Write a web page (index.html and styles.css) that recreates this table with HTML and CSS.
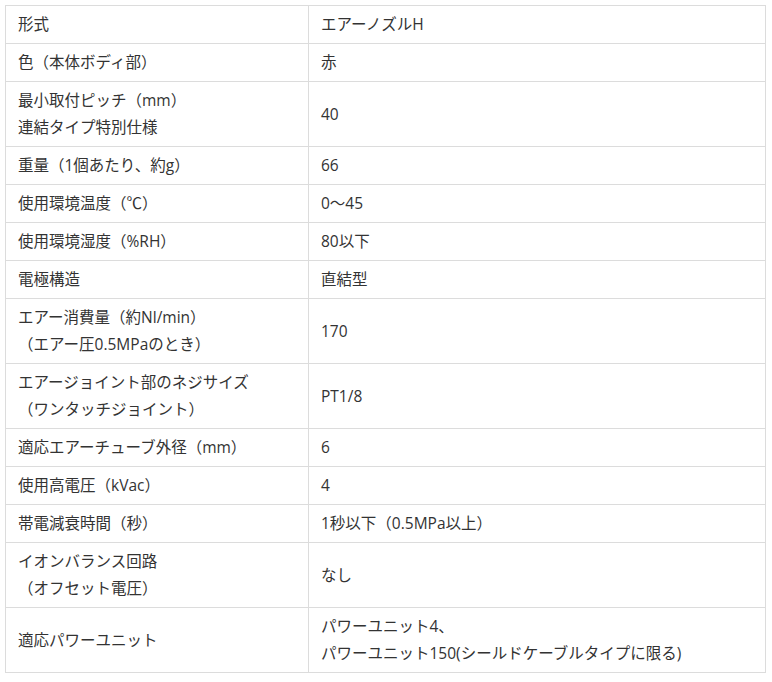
FILE: index.html
```html
<!DOCTYPE html>
<html lang="ja">
<head>
<meta charset="utf-8">
<link rel="stylesheet" href="styles.css">
</head>
<body>
<table class="spec">
<tbody>
<tr><td class="k">形式</td><td>エアーノズルH</td></tr>
<tr><td class="k">色（本体ボディ部）</td><td>赤</td></tr>
<tr><td class="k">最小取付ピッチ（mm）<br>連結タイプ特別仕様</td><td>40</td></tr>
<tr><td class="k">重量（1個あたり、約g）</td><td>66</td></tr>
<tr><td class="k">使用環境温度（℃）</td><td>0～45</td></tr>
<tr><td class="k">使用環境湿度（%RH）</td><td>80以下</td></tr>
<tr><td class="k">電極構造</td><td>直結型</td></tr>
<tr><td class="k">エアー消費量（約Nl/min）<br>（エアー圧0.5MPaのとき）</td><td>170</td></tr>
<tr><td class="k">エアージョイント部のネジサイズ<br>（ワンタッチジョイント）</td><td>PT1/8</td></tr>
<tr><td class="k">適応エアーチューブ外径（mm）</td><td>6</td></tr>
<tr><td class="k">使用高電圧（kVac）</td><td>4</td></tr>
<tr><td class="k">帯電減衰時間（秒）</td><td>1秒以下（0.5MPa以上）</td></tr>
<tr><td class="k">イオンバランス回路<br>（オフセット電圧）</td><td>なし</td></tr>
<tr><td class="k">適応パワーユニット</td><td>パワーユニット4、<br>パワーユニット150(シールドケーブルタイプに限る)</td></tr>
</tbody>
</table>
</body>
</html>
```
FILE: styles.css
```css
html, body {
  margin: 0;
  padding: 0;
  background: #fff;
}
body {
  padding: 5px;
  font-family: "Open Sans", "Noto Sans CJK JP", sans-serif;
  font-size: 15.5px;
  color: #333;
}
.spec {
  width: 761px;
  border-collapse: collapse;
  table-layout: fixed;
}
.spec td {
  border: 1px solid #dcdcdc;
  padding: 5px 12px;
  line-height: 27px;
  vertical-align: middle;
  text-align: left;
}
.spec td.k {
  width: 303px;
  box-sizing: border-box;
}
```
